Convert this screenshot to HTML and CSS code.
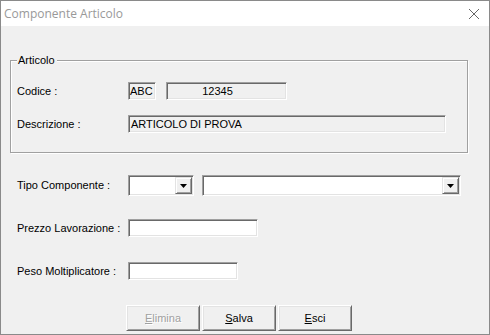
FILE: index.html
```html
<!DOCTYPE html>
<html lang="it">
<head>
  <meta charset="UTF-8">
  <title>Componente Articolo</title>
  <link rel="stylesheet" href="styles.css">
</head>
<body>
  <div class="window">
    <div class="titlebar">
      <span class="title">Componente Articolo</span>
      <svg class="close" width="12" height="12" viewBox="0 0 12 12">
        <path d="M1 1 L11 11 M11 1 L1 11" stroke="#666" stroke-width="1" fill="none"/>
      </svg>
    </div>
    <div class="client">
      <div class="group">
        <span class="legend">Articolo</span>
        <div class="group-grid">
          <label>Codice :</label>
          <div class="field-pair">
            <div class="field ro code">ABC</div>
            <div class="field ro num">12345</div>
          </div>
          <label>Descrizione :</label>
          <div class="field ro desc">ARTICOLO DI PROVA</div>
        </div>
      </div>

      <div class="row row-tipo">
        <label>Tipo Componente :</label>
        <div class="combo small">
          <span class="combo-text"></span>
          <span class="combo-btn"><svg width="7" height="4" viewBox="0 0 7 4"><polygon points="0,0 7,0 3.5,4" fill="#000"/></svg></span>
        </div>
        <div class="combo wide">
          <span class="combo-text"></span>
          <span class="combo-btn"><svg width="7" height="4" viewBox="0 0 7 4"><polygon points="0,0 7,0 3.5,4" fill="#000"/></svg></span>
        </div>
      </div>

      <div class="row row-prezzo">
        <label>Prezzo Lavorazione :</label>
        <div class="field edit prezzo"></div>
      </div>

      <div class="row row-peso">
        <label>Peso Moltiplicatore :</label>
        <div class="field edit peso"></div>
      </div>

      <div class="buttons">
        <button class="btn" disabled><u>E</u>limina</button>
        <button class="btn"><u>S</u>alva</button>
        <button class="btn"><u>E</u>sci</button>
      </div>
    </div>
  </div>
</body>
</html>
```

FILE: styles.css
```css
body {
  margin: 0;
  font-family: "Liberation Sans", Arial, sans-serif;
  font-size: 11px;
  color: #000;
}
.window {
  width: 490px;
  height: 335px;
  box-sizing: border-box;
  border: 1px solid #8a8a8a;
  background: #f0f0f0;
  display: flex;
  flex-direction: column;
  overflow: hidden;
}
.titlebar {
  height: 25px;
  background: #fff;
  display: flex;
  align-items: center;
  justify-content: space-between;
  padding: 0 9px 0 3px;
  flex-shrink: 0;
}
.title {
  font-family: "Open Sans", "Noto Sans", sans-serif;
  font-size: 12px;
  color: #999;
}
.close {
  display: block;
}
.client {
  flex: 1;
  padding: 0 0 0 9px;
}
label {
  line-height: 13px;
  white-space: nowrap;
}

/* group box */
.group {
  margin-top: 34px;
  width: 450px;
  border: 1px solid #a0a0a0;
  box-shadow: inset 1px 1px 0 #fff, 1px 1px 0 #fff;
  padding: 0 0 19px 6px;
}
.legend {
  display: table;
  margin-top: -7px;
  margin-left: 0;
  padding: 0 2px 0 1px;
  line-height: 13px;
  background: #f0f0f0;
}
.group-grid {
  margin-top: 15px;
  display: grid;
  grid-template-columns: 111px auto;
  row-gap: 15px;
  align-items: center;
}
.field-pair {
  display: flex;
  gap: 10px;
}

/* sunken fields */
.field {
  box-sizing: border-box;
  height: 18px;
  border-style: solid;
  border-width: 1px;
  border-color: #a0a0a0 #fff #fff #a0a0a0;
  box-shadow: inset 1px 1px 0 #696969, inset -1px -1px 0 #e3e3e3;
  line-height: 16px;
  padding: 0 2px;
  white-space: nowrap;
  overflow: hidden;
}
.ro { background: #f0f0f0; }
.edit { background: #fff; }
.code { width: 28px; padding: 0 1px; }
.num { width: 121px; text-align: center; padding-right: 20px; }
.desc { width: 318px; }
.prezzo { width: 130px; }
.peso { width: 110px; }

/* lower rows */
.row {
  display: flex;
  align-items: center;
  padding-left: 7px;
}
.row label {
  width: 111px;
}
.row-tipo { margin-top: 22px; }
.row-prezzo { margin-top: 23px; }
.row-peso { margin-top: 25px; }

.combo {
  box-sizing: border-box;
  height: 21px;
  background: #fff;
  border-style: solid;
  border-width: 1px;
  border-color: #a0a0a0 #fff #fff #a0a0a0;
  box-shadow: inset 1px 1px 0 #696969, inset -1px -1px 0 #e3e3e3;
  padding: 1px;
  display: flex;
  justify-content: flex-end;
}
.combo.small { width: 66px; }
.combo.wide { width: 259px; margin-left: 8px; }
.combo-text { flex: 1; }
.combo-btn {
  box-sizing: border-box;
  width: 17px;
  height: 17px;
  background: #f0f0f0;
  border-style: solid;
  border-width: 1px;
  border-color: #e3e3e3 #696969 #696969 #e3e3e3;
  box-shadow: inset 1px 1px 0 #fff, inset -1px -1px 0 #a0a0a0;
  display: flex;
  align-items: center;
  justify-content: center;
}
.combo-btn svg { display: block; }

/* buttons */
.buttons {
  margin-top: 25px;
  padding-left: 116px;
  display: flex;
  gap: 2px;
}
.btn {
  box-sizing: border-box;
  width: 74px;
  height: 26px;
  background: #f0f0f0;
  font-family: "Liberation Sans", Arial, sans-serif;
  font-size: 11px;
  color: #000;
  border-style: solid;
  border-width: 1px;
  border-color: #fff #696969 #696969 #fff;
  box-shadow: inset 1px 1px 0 #e3e3e3, inset -1px -1px 0 #a0a0a0;
  padding: 0;
}
.btn:disabled {
  color: #a0a0a0;
  text-shadow: 1px 1px 0 #fff;
}
```
